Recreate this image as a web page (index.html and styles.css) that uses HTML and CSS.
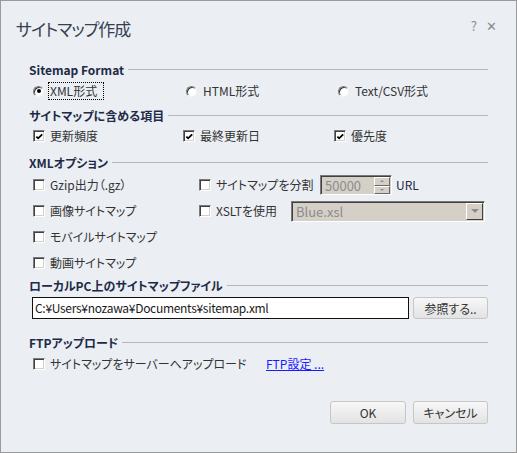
FILE: index.html
```html
<!DOCTYPE html>
<html lang="ja">
<head>
    <meta charset="UTF-8">
    <meta name="viewport" content="width=device-width, initial-scale=1.0">
    <title>サイトマップ作成</title>
    <link rel="stylesheet" href="styles.css">
</head>
<body>
    <div class="dialog">
        <div class="titlebar">
            <h1 class="title">サイトマップ作成</h1>
            <div class="title-tools">
                <span class="help">?</span>
                <span class="close">✕</span>
            </div>
        </div>

        <div class="content">
            <div class="group-title">Sitemap Format</div>
            <div class="row row-format">
                <label class="opt"><span class="radio checked"></span><span class="focus">XML形式</span></label>
                <label class="opt"><span class="radio"></span><span class="text">HTML形式</span></label>
                <label class="opt"><span class="radio"></span><span class="text">Text/CSV形式</span></label>
            </div>

            <div class="group-title g-items">サイトマップに含める項目</div>
            <div class="row row-items">
                <label class="opt"><span class="check checked"><svg width="10" height="10" viewBox="0 0 10 10"><polyline points="1.5,4.5 3.5,6.5 8,2" fill="none" stroke="#000" stroke-width="2"/></svg></span><span class="text">更新頻度</span></label>
                <label class="opt"><span class="check checked"><svg width="10" height="10" viewBox="0 0 10 10"><polyline points="1.5,4.5 3.5,6.5 8,2" fill="none" stroke="#000" stroke-width="2"/></svg></span><span class="text">最終更新日</span></label>
                <label class="opt"><span class="check checked"><svg width="10" height="10" viewBox="0 0 10 10"><polyline points="1.5,4.5 3.5,6.5 8,2" fill="none" stroke="#000" stroke-width="2"/></svg></span><span class="text">優先度</span></label>
            </div>

            <div class="group-title g-xml">XMLオプション</div>
            <div class="xml-options">
                <label class="opt"><span class="check"></span><span class="text">Gzip出力（.gz）</span></label>
                <div class="opt">
                    <span class="check"></span><span class="text split-label">サイトマップを分割</span>
                    <span class="spinner">
                        <span class="spin-value">50000</span>
                        <span class="spin-buttons">
                            <span class="spin-btn"><span class="arrow-up"></span></span>
                            <span class="spin-btn"><span class="arrow-down"></span></span>
                        </span>
                    </span>
                    <span class="text url">URL</span>
                </div>
                <label class="opt"><span class="check"></span><span class="text">画像サイトマップ</span></label>
                <div class="opt">
                    <span class="check"></span><span class="text xslt-label">XSLTを使用</span>
                    <span class="combo">
                        <span class="combo-value">Blue.xsl</span>
                        <span class="combo-btn"><span class="arrow-down"></span></span>
                    </span>
                </div>
                <label class="opt"><span class="check"></span><span class="text">モバイルサイトマップ</span></label>
                <div></div>
                <label class="opt"><span class="check"></span><span class="text">動画サイトマップ</span></label>
                <div></div>
            </div>

            <div class="group-title g-local">ローカルPC上のサイトマップファイル</div>
            <div class="file-row">
                <div class="path-input">C:¥Users¥nozawa¥Documents¥sitemap.xml</div>
                <button class="btn btn-browse">参照する..</button>
            </div>

            <div class="group-title g-ftp">FTPアップロード</div>
            <div class="row row-ftp">
                <label class="opt ftp-opt"><span class="check"></span><span class="text">サイトマップをサーバーへアップロード</span></label>
                <a class="link" href="#">FTP設定 ...</a>
            </div>

            <div class="actions">
                <button class="btn btn-ok">OK</button>
                <button class="btn btn-cancel">キャンセル</button>
            </div>
        </div>
    </div>
</body>
</html>
```

FILE: styles.css
```css
body {
    margin: 0;
    padding: 0;
    font-family: "Noto Sans CJK JP", "Noto Sans", sans-serif;
    font-size: 12px;
    font-feature-settings: "palt";
    color: #333;
    background-color: #ebeff4;
}
.dialog {
    box-sizing: border-box;
    width: 517px;
    height: 453px;
    border: 1px solid #9a9a9a;
    background-color: #ebeff4;
}
.titlebar {
    display: flex;
    justify-content: space-between;
    align-items: flex-start;
    height: 59px;
    padding: 0 19px 0 15px;
}
.title {
    margin: 0;
    padding-top: 14px;
    font-size: 17px;
    font-weight: normal;
    letter-spacing: -1px;
    line-height: 28px;
    color: #36404f;
}
.title-tools {
    display: flex;
    gap: 9px;
    margin-top: 16px;
    font-size: 13px;
    line-height: 18px;
    color: #8a8a8a;
}
.content {
    padding: 0 28px;
}
.group-title {
    display: flex;
    align-items: center;
    height: 19px;
    font-weight: bold;
    color: #1e2b47;
    white-space: nowrap;
}
.group-title::after {
    content: "";
    flex: 1;
    margin-left: 4px;
    border-top: 1px solid #b6b6b6;
}
.g-items {
    margin-top: 2px;
    height: 20px;
}
.g-xml {
    margin-top: 5px;
    height: 20px;
}
.g-local {
    height: 18px;
}
.g-ftp {
    margin-top: 13px;
    height: 20px;
}
.row {
    display: grid;
    align-items: center;
    padding-left: 4px;
}
.row-format {
    grid-template-columns: 153px 152px auto;
    height: 24px;
}
.row-items {
    grid-template-columns: 150px 151px auto;
    height: 22px;
}
.row-ftp {
    grid-template-columns: 233px auto;
    height: 23px;
}
.opt {
    display: flex;
    align-items: center;
    white-space: nowrap;
}
.text {
    line-height: 18px;
}
.radio {
    position: relative;
    box-sizing: border-box;
    width: 11px;
    height: 11px;
    border-radius: 50%;
    border: 1px solid;
    border-color: #7a7a7a #f4f4f4 #f4f4f4 #7a7a7a;
    box-shadow: inset 1px 1px 0 #3c3c3c;
    background: #fff;
    margin-right: 5px;
}
.radio.checked::after {
    content: "";
    position: absolute;
    left: 2.5px;
    top: 2.5px;
    width: 4px;
    height: 4px;
    border-radius: 50%;
    background: #000;
}
.radio + .text {
    margin-left: 1px;
}
.focus {
    line-height: 16px;
    padding: 0 6px 0 1px;
    outline: 1px dotted #000;
}
.check {
    display: flex;
    align-items: center;
    justify-content: center;
    box-sizing: border-box;
    width: 12px;
    height: 12px;
    border: 1px solid;
    border-color: #7a7a7a #fff #fff #7a7a7a;
    box-shadow: inset 1px 1px 0 #404040, inset -1px -1px 0 #d4d0c8;
    background: #fff;
    margin-right: 5px;
}
.check svg {
    margin: 1px 0 0 1px;
}
.xml-options {
    display: grid;
    grid-template-columns: 166px auto;
    grid-auto-rows: 26px;
    align-items: center;
    padding-left: 4px;
}
.split-label {
    width: 104px;
}
.xslt-label {
    width: 75px;
}
.spinner {
    display: flex;
    box-sizing: border-box;
    width: 72px;
    height: 20px;
    border: 1px solid;
    border-color: #7a7a7a #fff #fff #7a7a7a;
    box-shadow: inset 1px 1px 0 #404040;
    background: #d4d0c8;
}
.spin-value {
    flex: 1;
    padding: 1px 0 0 4px;
    font-size: 13px;
    line-height: 17px;
    color: #8c8c8c;
}
.spin-buttons {
    display: flex;
    flex-direction: column;
    width: 16px;
    padding: 1px 1px 0 0;
}
.spin-btn {
    flex: 1;
    display: flex;
    align-items: center;
    justify-content: center;
    box-sizing: border-box;
    border: 1px solid;
    border-color: #fff #6a6a6a #6a6a6a #fff;
    background: #d4d0c8;
}
.arrow-up {
    width: 0;
    height: 0;
    border-left: 2px solid transparent;
    border-right: 2px solid transparent;
    border-bottom: 2px solid #8c8c8c;
}
.arrow-down {
    width: 0;
    height: 0;
    border-left: 2px solid transparent;
    border-right: 2px solid transparent;
    border-top: 2px solid #8c8c8c;
}
.url {
    margin-left: 4px;
    color: #1e2b47;
}
.combo {
    display: flex;
    box-sizing: border-box;
    width: 194px;
    height: 21px;
    border: 1px solid;
    border-color: #7a7a7a #fff #fff #7a7a7a;
    box-shadow: inset 1px 1px 0 #404040;
    background: #d4d0c8;
}
.combo-value {
    flex: 1;
    padding: 1px 0 0 4px;
    font-size: 13px;
    line-height: 18px;
    color: #8c8c8c;
}
.combo-btn {
    display: flex;
    align-items: center;
    justify-content: center;
    box-sizing: border-box;
    width: 17px;
    height: 17px;
    margin: 1px 1px 0 0;
    border: 1px solid;
    border-color: #fff #404040 #404040 #fff;
    background: #d4d0c8;
}
.combo-btn .arrow-down {
    border-left-width: 4px;
    border-right-width: 4px;
    border-top-width: 4px;
}
.file-row {
    display: flex;
    gap: 4px;
    margin-top: 3px;
    padding-left: 3px;
}
.path-input {
    box-sizing: border-box;
    width: 378px;
    height: 22px;
    padding: 0 2px;
    border: 1px solid #111;
    background: #fff;
    line-height: 20px;
    letter-spacing: -0.3px;
    color: #1a1a1a;
    font-feature-settings: normal;
    white-space: nowrap;
    overflow: hidden;
}
.btn {
    box-sizing: border-box;
    height: 22px;
    padding: 0;
    border: 1px solid #c6c6c6;
    border-radius: 3px;
    background: linear-gradient(#f7f7f7, #e3e3e3);
    font-family: inherit;
    font-size: 12px;
    font-feature-settings: "palt";
    color: #333;
}
.btn-browse {
    width: 75px;
}
.link {
    color: #1a1aff;
    text-decoration: underline;
    line-height: 18px;
}
.actions {
    display: flex;
    justify-content: flex-end;
    gap: 7px;
    margin-top: 26px;
}
.btn-ok {
    width: 76px;
    height: 23px;
}
.btn-cancel {
    width: 75px;
    height: 23px;
}
```
